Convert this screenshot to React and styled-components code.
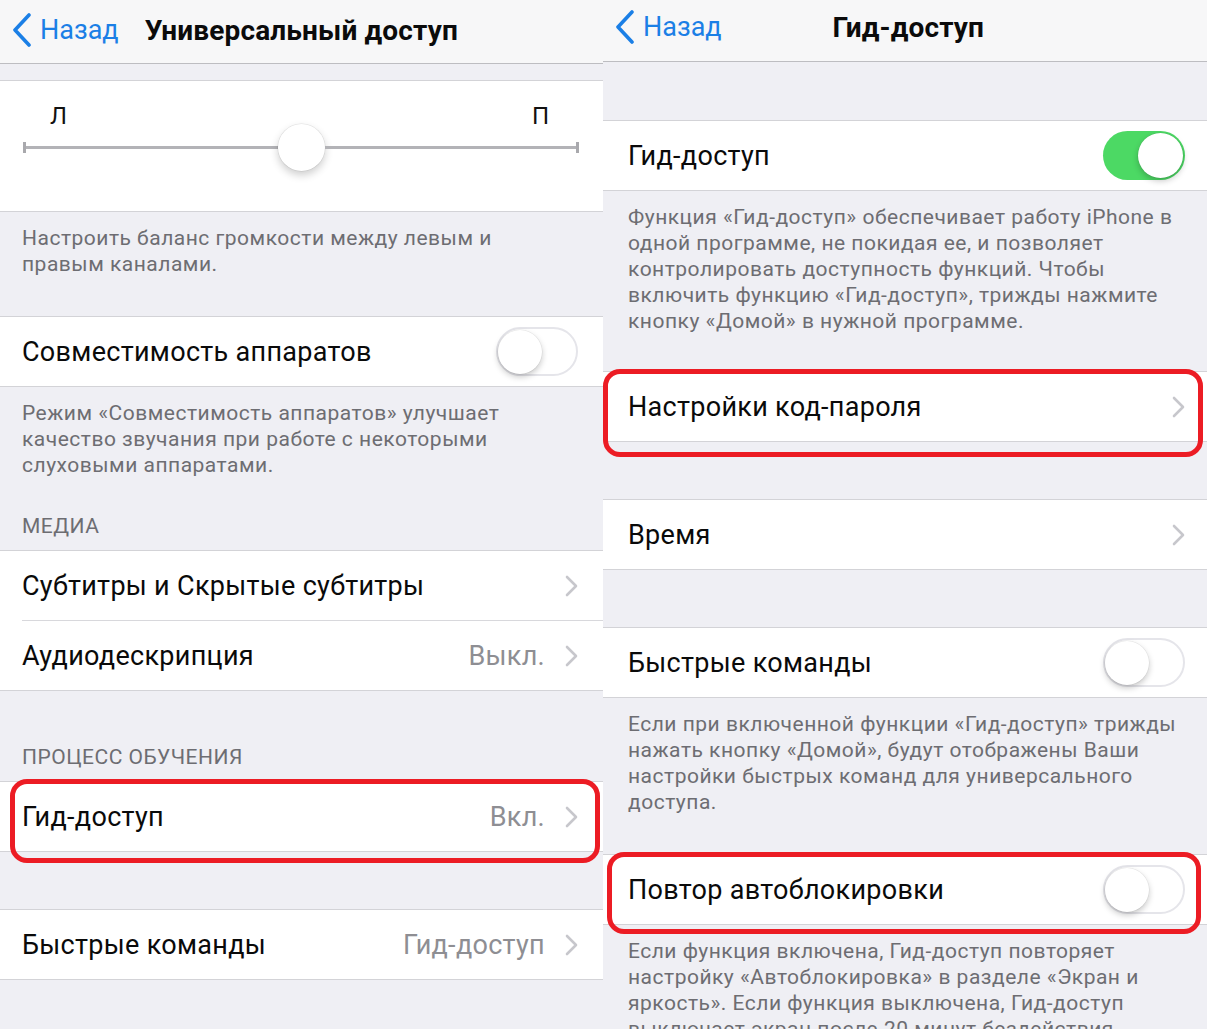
import styled, { createGlobalStyle } from 'styled-components'

const Global = createGlobalStyle`
  html, body {
    margin: 0;
    padding: 0;
    background: #efeff4;
  }
  body {
    font-family: Roboto, "Noto Sans", "Liberation Sans", sans-serif;
    -webkit-font-smoothing: antialiased;
  }
`

const Page = styled.div`
  display: flex;
  width: 1207px;
  height: 1029px;
  overflow: hidden;
`

const Screen = styled.div`
  width: ${p => p.$width}px;
  flex: none;
  display: flex;
  flex-direction: column;
  background: #efeff4;
  --pad-left: ${p => p.$padLeft}px;
  --pad-right: ${p => p.$padRight}px;
`

const NavBar = styled.div`
  height: ${p => p.$height}px;
  box-sizing: border-box;
  flex: none;
  display: flex;
  align-items: center;
  background: #f7f7f8;
  border-bottom: 1px solid #bdbdc1;
  padding: 0 0 ${p => p.$lift}px 12px;
`

const BackButton = styled.div`
  display: flex;
  align-items: center;
  gap: 8px;
  color: #1b7fe6;
  font-size: 27px;
`

const NavTitle = styled.div`
  font-size: 28px;
  font-weight: 700;
  color: #0b0b0b;
  letter-spacing: 0.15px;
  margin-left: ${p => (p.$centered ? 'auto' : '26px')};
  margin-right: ${p => (p.$centered ? '223px' : '0')};
`

const Gap = styled.div`
  height: ${p => p.$h}px;
  flex: none;
`

const Group = styled.div`
  background: #fff;
  border-top: 1px solid #d3d3d7;
  border-bottom: 1px solid #d3d3d7;
  flex: none;
`

const Row = styled.div`
  height: 69px;
  display: flex;
  align-items: center;
  padding-left: var(--pad-left);
  padding-right: var(--pad-right);
  & + & {
    border-top: 1px solid #d8d8dc;
    margin-left: var(--pad-left);
    padding-left: 0;
  }
`

const Label = styled.div`
  font-size: 27px;
  letter-spacing: 0.3px;
  color: #0a0a0a;
  flex: 1;
  white-space: nowrap;
`

const Value = styled.div`
  font-size: 27px;
  letter-spacing: 0.3px;
  color: #8e8e93;
  margin-right: 20px;
  white-space: nowrap;
`

const Footer = styled.div`
  padding: 13px var(--pad-right) 0 var(--pad-left);
  font-size: 21px;
  line-height: 26px;
  color: #6d6d72;
  white-space: nowrap;
  letter-spacing: 0.5px;
  flex: none;
`

const SectionHeader = styled.div`
  padding: 0 0 11px var(--pad-left);
  font-size: 21px;
  line-height: 26px;
  letter-spacing: 0.5px;
  color: #6d6d72;
  text-transform: uppercase;
  flex: none;
`

const SwitchTrack = styled.div`
  width: 82px;
  height: 49px;
  box-sizing: border-box;
  border-radius: 25px;
  display: flex;
  align-items: center;
  justify-content: ${p => (p.$on ? 'flex-end' : 'flex-start')};
  padding: 2px;
  background: ${p => (p.$on ? '#4cd964' : '#fff')};
  border: ${p => (p.$on ? 'none' : '2px solid #e5e5ea')};
`

const SwitchKnob = styled.div`
  width: ${p => (p.$on ? 45 : 44)}px;
  height: ${p => (p.$on ? 45 : 44)}px;
  border-radius: 50%;
  background: #fff;
  box-shadow: 0 3px 6px rgba(0, 0, 0, 0.22), 0 0 0 0.5px rgba(0, 0, 0, 0.08);
  margin-left: ${p => (p.$on ? 0 : -2)}px;
`

const SliderCell = styled.div`
  height: 130px;
  box-sizing: border-box;
  padding: 23px 24px 0 23px;
`

const SliderLabels = styled.div`
  display: flex;
  justify-content: space-between;
  padding: 0 30px 0 27px;
  font-size: 24px;
  line-height: 24px;
  color: #111;
`

const SliderTrack = styled.div`
  height: 46px;
  margin-top: -4px;
  display: flex;
  align-items: center;
`

const Tick = styled.div`
  width: 3px;
  height: 11px;
  background: #a9a9ad;
  flex: none;
`

const TrackLine = styled.div`
  flex: 1;
  height: 3px;
  background: #b3b3b7;
`

const SliderThumb = styled.div`
  width: 47px;
  height: 47px;
  border-radius: 50%;
  background: #fff;
  flex: none;
  box-shadow: 0 4px 8px rgba(0, 0, 0, 0.2), 0 0 0 0.5px rgba(0, 0, 0, 0.1);
`

const Marked = styled.div`
  position: relative;
  flex: none;
`

const Ring = styled.div`
  position: absolute;
  top: ${p => p.$top}px;
  bottom: ${p => p.$bottom}px;
  left: ${p => p.$left}px;
  right: ${p => p.$right}px;
  border: 5px solid #ec1c24;
  border-radius: 17px;
  pointer-events: none;
  z-index: 2;
`

function BackChevron() {
  return (
    <svg width="20" height="34" viewBox="0 0 20 34">
      <path d="M17 2 L3 17 L17 32" fill="none" stroke="#1b7fe6" strokeWidth="3.6" strokeLinecap="round" strokeLinejoin="round" />
    </svg>
  )
}

function Chevron() {
  return (
    <svg width="13" height="22" viewBox="0 0 13 22">
      <path d="M2 2 L11 11 L2 20" fill="none" stroke="#c7c7cc" strokeWidth="2.6" strokeLinecap="round" strokeLinejoin="round" />
    </svg>
  )
}

function Switch({ on = false }) {
  return (
    <SwitchTrack $on={on}>
      <SwitchKnob $on={on} />
    </SwitchTrack>
  )
}

function Nav({ title, centered, height, lift }) {
  return (
    <NavBar $height={height} $lift={lift}>
      <BackButton>
        <BackChevron />
        <span>Назад</span>
      </BackButton>
      <NavTitle $centered={centered}>{title}</NavTitle>
    </NavBar>
  )
}

function Lines({ lines }) {
  return (
    <Footer>
      {lines.map((l, i) => (
        <div key={i}>{l}</div>
      ))}
    </Footer>
  )
}

function AccessibilityScreen() {
  return (
    <Screen $width={603} $padLeft={22} $padRight={25}>
      <Nav title="Универсальный доступ" height={64} lift={3} />
      <Gap $h={16} />
      <Group>
        <SliderCell>
          <SliderLabels>
            <span>Л</span>
            <span>П</span>
          </SliderLabels>
          <SliderTrack>
            <Tick />
            <TrackLine />
            <SliderThumb />
            <TrackLine />
            <Tick />
          </SliderTrack>
        </SliderCell>
      </Group>
      <Lines lines={['Настроить баланс громкости между левым и', 'правым каналами.']} />
      <Gap $h={39} />
      <Group>
        <Row>
          <Label>Совместимость аппаратов</Label>
          <Switch />
        </Row>
      </Group>
      <Lines
        lines={[
          'Режим «Совместимость аппаратов» улучшает',
          'качество звучания при работе с некоторыми',
          'слуховыми аппаратами.',
        ]}
      />
      <Gap $h={35} />
      <SectionHeader>Медиа</SectionHeader>
      <Group>
        <Row>
          <Label>Субтитры и Скрытые субтитры</Label>
          <Chevron />
        </Row>
        <Row>
          <Label>Аудиодескрипция</Label>
          <Value>Выкл.</Value>
          <Chevron />
        </Row>
      </Group>
      <Gap $h={53} />
      <SectionHeader>Процесс обучения</SectionHeader>
      <Marked>
        <Group>
          <Row>
            <Label>Гид-доступ</Label>
            <Value>Вкл.</Value>
            <Chevron />
          </Row>
        </Group>
        <Ring $top={-2} $bottom={-11} $left={10} $right={3} />
      </Marked>
      <Gap $h={57} />
      <Group>
        <Row>
          <Label>Быстрые команды</Label>
          <Value>Гид-доступ</Value>
          <Chevron />
        </Row>
      </Group>
    </Screen>
  )
}

function GuidedAccessScreen() {
  return (
    <Screen $width={604} $padLeft={25} $padRight={22}>
      <Nav title="Гид-доступ" centered height={62} lift={7} />
      <Gap $h={58} />
      <Group>
        <Row>
          <Label>Гид-доступ</Label>
          <Switch on />
        </Row>
      </Group>
      <Lines
        lines={[
          'Функция «Гид-доступ» обеспечивает работу iPhone в',
          'одной программе, не покидая ее, и позволяет',
          'контролировать доступность функций. Чтобы',
          'включить функцию «Гид-доступ», трижды нажмите',
          'кнопку «Домой» в нужной программе.',
        ]}
      />
      <Gap $h={37} />
      <Marked>
        <Group>
          <Row>
            <Label>Настройки код-пароля</Label>
            <Chevron />
          </Row>
        </Group>
        <Ring $top={-2} $bottom={-15} $left={0} $right={4} />
      </Marked>
      <Gap $h={57} />
      <Group>
        <Row>
          <Label>Время</Label>
          <Chevron />
        </Row>
      </Group>
      <Gap $h={57} />
      <Group>
        <Row>
          <Label>Быстрые команды</Label>
          <Switch />
        </Row>
      </Group>
      <Lines
        lines={[
          'Если при включенной функции «Гид-доступ» трижды',
          'нажать кнопку «Домой», будут отображены Ваши',
          'настройки быстрых команд для универсального',
          'доступа.',
        ]}
      />
      <Gap $h={39} />
      <Marked>
        <Group>
          <Row>
            <Label>Повтор автоблокировки</Label>
            <Switch />
          </Row>
        </Group>
        <Ring $top={-2} $bottom={-9} $left={4} $right={6} />
      </Marked>
      <Lines
        lines={[
          'Если функция включена, Гид-доступ повторяет',
          'настройку «Автоблокировка» в разделе «Экран и',
          'яркость». Если функция выключена, Гид-доступ',
          'выключает экран после 20 минут бездействия.',
        ]}
      />
    </Screen>
  )
}

export default function App() {
  return (
    <>
      <Global />
      <Page>
        <AccessibilityScreen />
        <GuidedAccessScreen />
      </Page>
    </>
  )
}
